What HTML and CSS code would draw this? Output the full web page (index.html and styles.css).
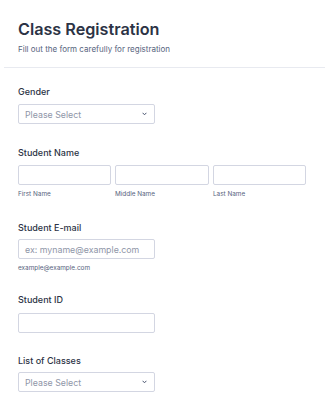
FILE: index.html
```html
<!DOCTYPE html>
<html lang="en">
<head>
<meta charset="utf-8">
<title>Class Registration</title>
<link rel="stylesheet" href="styles.css">
</head>
<body>
<div class="page">
  <header class="header">
    <h1 class="title">Class Registration</h1>
    <p class="subtitle">Fill out the form carefully for registration</p>
  </header>
  <div class="divider"></div>
  <form class="form">
    <div class="field">
      <div class="label">Gender</div>
      <div class="control select">
        <span class="placeholder">Please Select</span>
        <svg class="chev" width="5" height="4" viewBox="0 0 5 4"><path d="M0.6 0.8 L2.5 2.8 L4.4 0.8" fill="none" stroke="#4a5570" stroke-width="1"/></svg>
      </div>
    </div>
    <div class="field">
      <div class="label">Student Name</div>
      <div class="name-grid">
        <div class="name-col"><div class="control"></div><div class="sublabel">First Name</div></div>
        <div class="name-col"><div class="control"></div><div class="sublabel">Middle Name</div></div>
        <div class="name-col"><div class="control"></div><div class="sublabel">Last Name</div></div>
      </div>
    </div>
    <div class="field field-email">
      <div class="label">Student E-mail</div>
      <div class="control"><span class="placeholder">ex: myname@example.com</span></div>
      <div class="sublabel">example@example.com</div>
    </div>
    <div class="field field-id">
      <div class="label">Student ID</div>
      <div class="control"></div>
    </div>
    <div class="field field-classes">
      <div class="label">List of Classes</div>
      <div class="control select">
        <span class="placeholder">Please Select</span>
        <svg class="chev" width="5" height="4" viewBox="0 0 5 4"><path d="M0.6 0.8 L2.5 2.8 L4.4 0.8" fill="none" stroke="#4a5570" stroke-width="1"/></svg>
      </div>
    </div>
  </form>
</div>
</body>
</html>
```

FILE: styles.css
```css
* { box-sizing: border-box; }
html, body { margin: 0; padding: 0; background: #ffffff; }
body { font-family: Inter, "Noto Sans", sans-serif; color: #2c3345; }
.page { width: 325px; }
.header { padding: 19px 18px 0; height: 67px; }
.title { margin: 0; font-size: 16.2px; line-height: 20px; font-weight: 600; color: #2c3345; letter-spacing: 0; }
.subtitle { margin: 5px 0 0; font-size: 8px; line-height: 10px; color: #57647e; }
.divider { margin-left: 4px; border-top: 1px solid #e8eaf0; }
.form { padding: 18px 18px 0; }
.field { margin-bottom: 23px; }
.label { font-size: 9px; line-height: 12px; font-weight: 500; color: #2c3345; margin-bottom: 6px; }
.control { width: 137px; height: 20px; border: 1px solid #d3d6e2; border-radius: 2px; background: #fff; display: flex; align-items: center; padding: 0 6px; }
.select { justify-content: space-between; }
.placeholder { font-size: 8.8px; color: #8f96a8; white-space: nowrap; }
.chev { display: block; margin-right: 1px; }
.name-grid { width: 288px; display: grid; grid-template-columns: 93px 94px 93px; column-gap: 4px; }
.name-grid .control { width: 100%; }
.sublabel { margin-top: 4px; font-size: 6.4px; line-height: 10px; color: #57647e; }
.field-email { margin-bottom: 21px; }
.field-email .label { margin-bottom: 5px; }
.field-id .label { margin-bottom: 7px; }
.field-id { margin-bottom: 22px; }
.field-classes .label { margin-bottom: 5px; }
```
